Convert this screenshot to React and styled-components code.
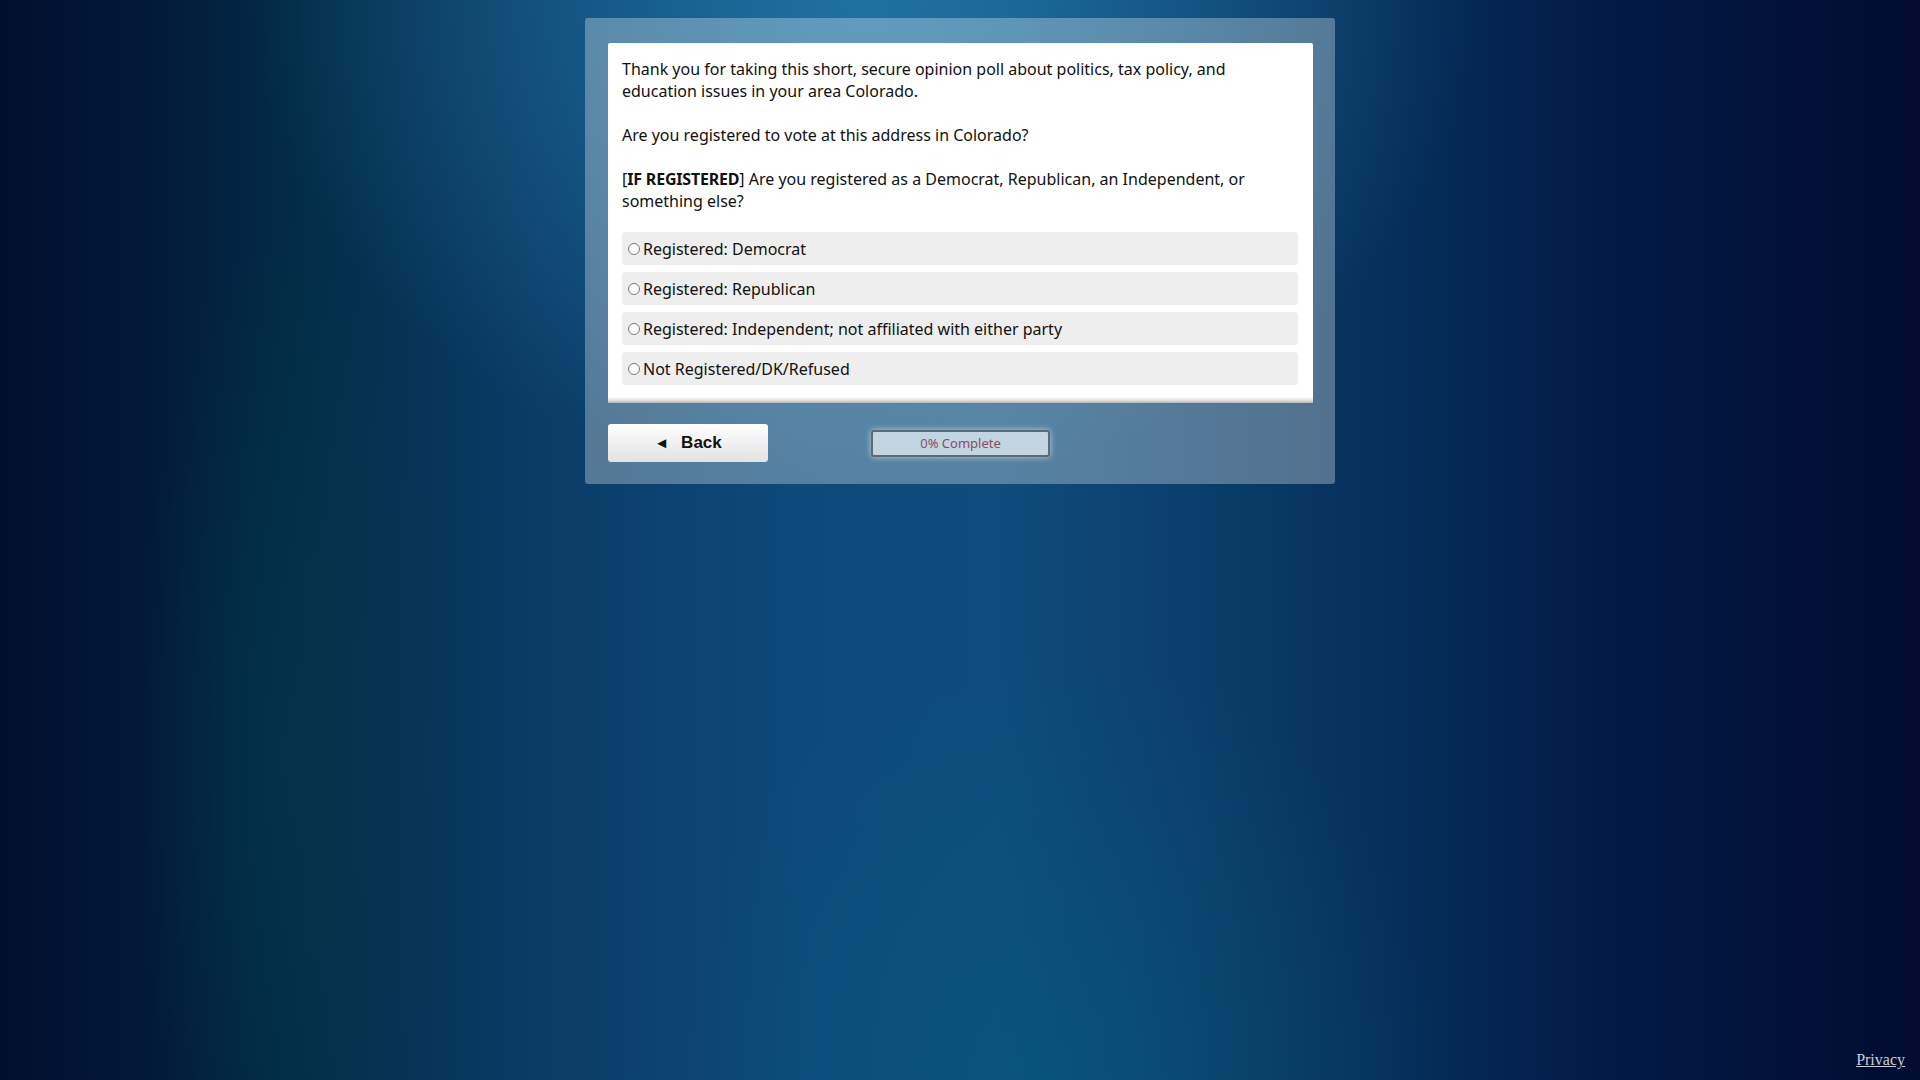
import styled, { createGlobalStyle } from 'styled-components'

const GlobalStyle = createGlobalStyle`
  html, body {
    margin: 0;
    padding: 0;
    height: 100%;
  }
  body {
    font-family: "Noto Sans", "Open Sans", sans-serif;
    background-color: #01102f;
  }
`

const Page = styled.div`
  min-height: 100vh;
  display: flex;
  flex-direction: column;
  align-items: center;
  box-sizing: border-box;
  padding-top: 18px;
  background:
    radial-gradient(ellipse 32% 45% at 45% 0%, rgba(45, 145, 195, 0.55), rgba(45, 145, 195, 0) 100%),
    radial-gradient(ellipse 20% 40% at 55% 100%, rgba(5, 95, 125, 0.45), rgba(5, 95, 125, 0) 100%),
    radial-gradient(ellipse 8% 50% at 15% 70%, rgba(3, 60, 75, 0.5), rgba(3, 60, 75, 0) 100%),
    linear-gradient(to right, #010f2e 0%, #021a3a 8%, #032d48 16%, #0a3c66 28%, #0d4a7a 42%, #0e4c7b 52%, #0b3f6c 62%, #06305a 72%, #021a45 84%, #010c30 100%);
`

const Panel = styled.div`
  width: 750px;
  box-sizing: border-box;
  padding: 25px 22px 22px 23px;
  background: rgba(255, 255, 255, 0.3);
  border-radius: 3px;
`

const Card = styled.div`
  background: linear-gradient(to bottom, #fff calc(100% - 6px), #e4e4e4 calc(100% - 3px), #b5b5b5 100%);
  padding: 15px 15px 18px 14px;
  border-radius: 2px 2px 0 0;
`

const Question = styled.div`
  font-size: 16px;
  line-height: 22px;
  color: #111;
  margin-bottom: 20px;

  b {
    font-weight: 700;
    letter-spacing: -0.2px;
  }
`

const Options = styled.div`
  display: flex;
  flex-direction: column;
  gap: 7px;
`

const Option = styled.label`
  display: flex;
  align-items: center;
  height: 33px;
  background: #eee;
  border-radius: 3px;
  font-size: 16px;
  color: #111;
  cursor: pointer;

  input {
    width: 12px;
    height: 12px;
    margin: 0 3px 0 6px;
    flex: none;
  }
`

const Footer = styled.div`
  display: grid;
  grid-template-columns: 1fr auto 1fr;
  align-items: center;
  margin-top: 21px;
`

const BackButton = styled.button`
  justify-self: start;
  width: 160px;
  height: 38px;
  border: none;
  border-radius: 3px;
  background: linear-gradient(to bottom, #ffffff, #e2e2e2);
  font-family: "Liberation Sans", Arial, sans-serif;
  font-weight: 700;
  font-size: 17px;
  color: #111;
  display: flex;
  align-items: center;
  justify-content: center;
  gap: 12px;
  cursor: pointer;
  padding: 0 0 1px;
`

const Arrow = styled.span`
  font-size: 15px;
`

const Progress = styled.div`
  width: 179px;
  height: 27px;
  box-sizing: border-box;
  border: 2px solid #5d6b78;
  border-radius: 3px;
  background: #c2d5e1;
  box-shadow: 0 0 6px rgba(255, 255, 255, 0.6);
  display: flex;
  align-items: center;
  justify-content: center;
  font-size: 13px;
  color: #8c4a60;
`

const BottomBar = styled.div`
  margin-top: auto;
  align-self: stretch;
  text-align: right;
  padding: 0 15px 10px;
`

const PrivacyLink = styled.a`
  font-family: "Liberation Serif", "Times New Roman", serif;
  font-size: 16px;
  color: #c9ccd8;
  text-decoration: underline;
`

const options = [
  'Registered: Democrat',
  'Registered: Republican',
  'Registered: Independent; not affiliated with either party',
  'Not Registered/DK/Refused',
]

export default function App() {
  return (
    <>
      <GlobalStyle />
      <Page>
        <Panel>
          <Card>
            <Question>
              Thank you for taking this short, secure opinion poll about politics, tax policy, and
              education issues in your area Colorado.
              <br />
              <br />
              Are you registered to vote at this address in Colorado?
              <br />
              <br />
              [<b>IF REGISTERED</b>] Are you registered as a Democrat, Republican, an Independent, or
              something else?
            </Question>
            <Options>
              {options.map((o) => (
                <Option key={o}>
                  <input type="radio" name="reg" />
                  {o}
                </Option>
              ))}
            </Options>
          </Card>
          <Footer>
            <BackButton>
              <Arrow>◄</Arrow>
              Back
            </BackButton>
            <Progress>0% Complete</Progress>
            <div />
          </Footer>
        </Panel>
        <BottomBar>
          <PrivacyLink href="#">Privacy</PrivacyLink>
        </BottomBar>
      </Page>
    </>
  )
}
